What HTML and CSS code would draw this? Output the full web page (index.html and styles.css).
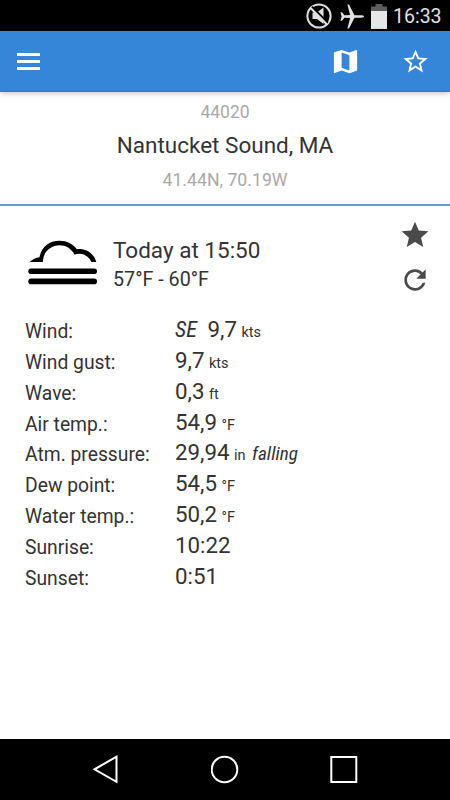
FILE: index.html
```
<!DOCTYPE html>
<html lang="en">
<head>
	<meta charset="UTF-8">
	<title>Nantucket Sound, MA</title>
	<link rel="stylesheet" href="styles.css">
</head>
<body>
	<div class="statusbar">
		<svg class="mute" width="26" height="26" viewBox="0 0 26 26">
			<circle cx="13" cy="13" r="11.6" fill="none" stroke="#e0e0e0" stroke-width="2"/>
			<path d="M6.500 9.500h4.500l6.500-5v16.500l-6.500-5H6.500z" fill="#e0e0e0"/>
			<path d="M5.900 3.700l16 16" stroke="#000" stroke-width="2"/>
			<path d="M4.800 5.200l16 16" stroke="#e0e0e0" stroke-width="2"/>
		</svg>
		<svg class="plane" width="24" height="25" viewBox="0 0 24 24">
			<path d="M24 12c0-.8-1.500-1.200-3-1.200h-6.500L9 0H7.400l2.700 10.500-5.600.3L2 7.700H.4L1.700 12 .4 16.300H2l2.500-3.100 5.600.300L7.400 24H9l5.500-10.800H21c1.500 0 3-.4 3-1.200z" fill="#e0e0e0"/>
		</svg>
		<svg class="battery" width="16" height="25" viewBox="0 0 16 25">
			<path d="M4.500 0h7v2.500H16V8H0V2.500h4.500z" fill="#5d5d5d"/>
			<path d="M0 7h16v18H0z" fill="#e6e6e6"/>
		</svg>
		<span class="clock">16:33</span>
	</div>

	<div class="toolbar">
		<div class="menu">
			<span></span>
			<span></span>
			<span></span>
		</div>
		<svg class="map" width="31" height="31" viewBox="0 0 24 24">
			<path fill="#fff" d="M20.500 3l-.16.030L15 5.100 9 3 3.360 4.900c-.21.070-.36.250-.36.480V20.500c0 .28.220.5.500.5l.16-.030L9 18.900l6 2.100 5.640-1.900c.21-.070.360-.250.360-.480V3.500c0-.280-.220-.5-.5-.5zM15 19l-6-2.110V5l6 2.110V19z"/>
		</svg>
		<svg class="star-line" width="29" height="29" viewBox="0 0 24 24">
			<path fill="#fff" d="M22 9.240l-7.190-.620L12 2 9.190 8.630 2 9.240l5.460 4.730L5.820 21 12 17.270 18.180 21l-1.630-7.030L22 9.240zM12 15.400l-3.760 2.270 1-4.280-3.320-2.880 4.380-.380L12 6.100l1.710 4.040 4.380.380-3.320 2.880 1 4.280L12 15.400z"/>
		</svg>
	</div>

	<div class="station">
		<p class="code">44020</p>
		<h1>Nantucket Sound, MA</h1>
		<p class="coords">41.44N, 70.19W</p>
	</div>

	<div class="summary">
		<svg class="weather" width="70" height="46" viewBox="0 0 70 46">
			<path d="M1.500 22Q6 18 11.500 17.300C13.500 7 21 .8 31.500.8c7.500 0 13.500 3.200 17.300 8.400C58 8.200 66 13.500 68.300 22h-4.800C60.500 15.500 54.500 12.300 46.500 14.500 43 8.500 38 5.300 31.500 5.300 22.500 5.300 15 12 15 22z"/>
			<rect x="0.300" y="28.400" width="68.700" height="5.600" rx="2.800"/>
			<rect x="0.300" y="38.600" width="68.700" height="5.600" rx="2.800"/>
		</svg>
		<div class="when">
			<p class="date">Today at 15:50</p>
			<p class="range">57°F - 60°F</p>
		</div>
		<div class="actions">
			<svg width="32" height="32" viewBox="0 0 24 24">
				<path fill="#4a4a4a" d="M12 17.270L18.180 21l-1.640-7.030L22 9.240l-7.190-.610L12 2 9.190 8.630 2 9.240l5.460 4.730L5.820 21z"/>
			</svg>
			<svg width="32" height="32" viewBox="0 0 24 24">
				<path fill="#4a4a4a" d="M17.650 6.350C16.200 4.900 14.210 4 12 4c-4.420 0-7.990 3.580-7.990 8s3.570 8 7.990 8c3.730 0 6.840-2.550 7.730-6h-2.080c-.82 2.330-3.040 4-5.650 4-3.310 0-6-2.690-6-6s2.690-6 6-6c1.660 0 3.140.690 4.220 1.780L13 11h7V4l-2.350 2.350z"/>
			</svg>
		</div>
	</div>

	<dl class="readings">
		<dt>Wind:</dt><dd><i class="dir">SE</i>9,7<small>kts</small></dd>
		<dt>Wind gust:</dt><dd>9,7<small>kts</small></dd>
		<dt>Wave:</dt><dd>0,3<small>ft</small></dd>
		<dt>Air temp.:</dt><dd>54,9<small>°F</small></dd>
		<dt>Atm. pressure:</dt><dd>29,94<small>in</small><i class="trend">falling</i></dd>
		<dt>Dew point:</dt><dd>54,5<small>°F</small></dd>
		<dt>Water temp.:</dt><dd>50,2<small>°F</small></dd>
		<dt>Sunrise:</dt><dd>10:22</dd>
		<dt>Sunset:</dt><dd>0:51</dd>
	</dl>

	<div class="navbar">
		<svg width="28" height="30" viewBox="0 0 28 30">
			<path d="M24.500 2.700v25.100L2.500 15.300z" fill="none" stroke="#fff" stroke-width="2"/>
		</svg>
		<svg width="28" height="30" viewBox="0 0 28 30">
			<circle cx="13.500" cy="15.500" r="12.800" fill="none" stroke="#fff" stroke-width="2"/>
		</svg>
		<svg width="28" height="30" viewBox="0 0 28 30">
			<path d="M1.300 3h25v25h-25z" fill="none" stroke="#fff" stroke-width="2"/>
		</svg>
	</div>
</body>
</html>
```
FILE: styles.css
```
* {
	margin: 0;
	padding: 0;
	box-sizing: border-box;
}
body {
	display: flex;
	flex-direction: column;
	width: 450px;
	height: 800px;
	overflow: hidden;
	background: #fff;
	color: #333;
	font-family: Roboto, "Liberation Sans", sans-serif;
}
svg {
	display: block;
	flex: none;
}
.statusbar {
	display: flex;
	align-items: center;
	justify-content: flex-end;
	height: 31px;
	padding: 1px 9px 0 0;
	background: #000;
	color: #e0e0e0;
}
.plane {
	margin-left: 8px;
}
.battery {
	margin-left: 7px;
}
.clock {
	width: 48px;
	margin-left: 6px;
	font-size: 19.500px;
	line-height: 30px;
	padding-top: 1px;
	white-space: nowrap;
}
.toolbar {
	display: flex;
	align-items: center;
	height: 61px;
	padding: 1px 20px 0 16.500px;
	border-bottom: 1px solid #2a7bd0;
	background: #3585d8;
	box-shadow: 0 1px 6px rgba(0, 0, 0, 0.25);
}
.menu {
	display: flex;
	flex-direction: column;
	gap: 4px;
	width: 23.500px;
}
.menu span {
	height: 2.700px;
	background: #fff;
}
.map {
	margin-left: auto;
}
.star-line {
	margin-left: 40px;
}
.station {
	height: 114px;
	padding-top: 8px;
	border-bottom: 2px solid #6699dc;
	text-align: center;
}
.code,
.coords {
	color: #a9a9a9;
	font-size: 17.500px;
	line-height: 24px;
}
.station h1 {
	margin: 5px 0 7px;
	font-size: 22.500px;
	font-weight: normal;
	line-height: 32px;
}
.coords {
	font-size: 17.700px;
}
.summary {
	display: flex;
	height: 109px;
	padding: 13px 19px 0 28px;
}
.weather {
	margin-top: 21px;
}
.when {
	margin: 15px auto 0 15px;
}
.date {
	font-size: 22.500px;
	line-height: 32px;
}
.range {
	font-size: 19.700px;
	line-height: 28px;
}
.actions {
	display: flex;
	flex-direction: column;
	gap: 13px;
}
.readings {
	display: grid;
	grid-template-columns: 150px 1fr;
	grid-auto-rows: 30.850px;
	align-items: start;
	padding-left: 25px;
}
.readings dt {
	font-size: 19.300px;
	line-height: 33px;
}
.readings dd {
	font-size: 22.300px;
	line-height: 28px;
	white-space: nowrap;
}
.readings small {
	margin-left: 4.500px;
	font-size: 14.500px;
}
.readings i {
	display: inline-block;
	font-family: "Roboto Condensed", Roboto, sans-serif;
	font-stretch: condensed;
}
.dir {
	margin-right: 10.500px;
}
.trend {
	margin-left: 6.500px;
	font-size: 19.200px;
}
.navbar {
	display: flex;
	justify-content: center;
	gap: 91px;
	height: 61.500px;
	margin-top: auto;
	padding-top: 15.500px;
	background: #000;
}
```
